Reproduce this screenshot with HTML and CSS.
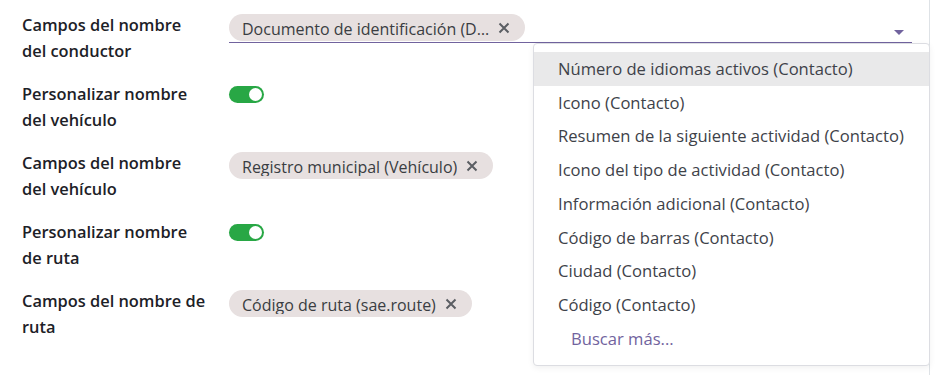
FILE: index.html
```html
<!DOCTYPE html>
<html lang="es">
<head>
<meta charset="utf-8">
<title>Campos</title>
<link rel="stylesheet" href="styles.css">
</head>
<body>
<div class="page">
  <div class="form">
    <div class="label">Campos del nombre<br>del conductor</div>
    <div class="field focused">
      <span class="chip"><span class="chip-text">Documento de identificación (D…</span><svg class="x" viewBox="0 0 12 12" width="12" height="12"><path d="M1.5 1.5 L10.5 10.5 M10.5 1.5 L1.5 10.5"/></svg></span>
      <span class="spacer"></span>
      <svg class="caret" viewBox="0 0 10 5" width="10" height="5"><path d="M0 0 H10 L5 5 Z"/></svg>
      <div class="dropdown">
        <div class="item active">Número de idiomas activos (Contacto)</div>
        <div class="item">Icono (Contacto)</div>
        <div class="item">Resumen de la siguiente actividad (Contacto)</div>
        <div class="item">Icono del tipo de actividad (Contacto)</div>
        <div class="item">Información adicional (Contacto)</div>
        <div class="item">Código de barras (Contacto)</div>
        <div class="item">Ciudad (Contacto)</div>
        <div class="item">Código (Contacto)</div>
        <div class="item more">Buscar más...</div>
      </div>
    </div>

    <div class="label">Personalizar nombre<br>del vehículo</div>
    <div class="field"><span class="toggle"><span class="knob"></span></span></div>

    <div class="label">Campos del nombre<br>del vehículo</div>
    <div class="field">
      <span class="chip"><span class="chip-text">Registro municipal (Vehículo)</span><svg class="x" viewBox="0 0 12 12" width="12" height="12"><path d="M1.5 1.5 L10.5 10.5 M10.5 1.5 L1.5 10.5"/></svg></span>
    </div>

    <div class="label">Personalizar nombre<br>de ruta</div>
    <div class="field"><span class="toggle"><span class="knob"></span></span></div>

    <div class="label">Campos del nombre de<br>ruta</div>
    <div class="field">
      <span class="chip"><span class="chip-text">Código de ruta (sae.route)</span><svg class="x" viewBox="0 0 12 12" width="12" height="12"><path d="M1.5 1.5 L10.5 10.5 M10.5 1.5 L1.5 10.5"/></svg></span>
    </div>
  </div>
</div>
</body>
</html>
```
FILE: styles.css
```css
* { box-sizing: border-box; }
html, body { margin: 0; padding: 0; background: #ffffff; }
body {
  font-family: "Open Sans", "Noto Sans", sans-serif;
  color: #212529;
  width: 940px;
  height: 375px;
  overflow: hidden;
}
.page {
  width: 930px;
  height: 375px;
  border-right: 1px solid #dee2e6;
}
.form {
  display: grid;
  grid-template-columns: 207px 1fr;
  grid-auto-rows: 52px;
  row-gap: 17px;
  padding: 12px 17px 0 22px;
}
.label {
  font-size: 16.4px;
  font-weight: 600;
  line-height: 26px;
  color: #1d2127;
}
.field {
  position: relative;
  display: flex;
  align-items: flex-start;
}
.field.focused {
  height: 31px;
  padding-top: 2px;
  border-bottom: 1px solid #71639e;
}
.chip {
  display: inline-flex;
  align-items: center;
  height: 27px;
  margin-top: 2px;
  padding: 0 15px 0 13px;
  border-radius: 14px;
  background: #e7e0e0;
  color: #3a3d42;
}
.field.focused .chip { margin-top: 0; }
.chip-text {
  font-size: 16px;
  font-weight: 500;
  line-height: 17px;
  overflow: hidden;
  white-space: nowrap;
  padding-top: 3px;
  height: 17px;
  box-sizing: content-box;
}
.x {
  margin-left: 9px;
  stroke: #5b5e63;
  stroke-width: 2;
  fill: none;
}
.spacer { flex: 1; }
.caret {
  margin: 16px 8px 0 0;
  fill: #71639e;
}
.toggle {
  display: inline-flex;
  align-items: center;
  justify-content: flex-end;
  width: 35px;
  height: 17px;
  margin-top: 5px;
  padding-right: 2px;
  border-radius: 9px;
  background: #28a745;
}
.knob {
  width: 13px;
  height: 13px;
  border-radius: 50%;
  background: #ffffff;
}
.dropdown {
  position: absolute;
  left: 304px;
  top: 31px;
  width: 397px;
  padding: 8px 0 10px;
  background: #ffffff;
  border: 1px solid #dcdde2;
  border-radius: 4px;
  box-shadow: 0 2px 6px rgba(0, 0, 0, 0.06);
  z-index: 2;
}
.item {
  padding: 4px 24px;
  font-size: 16.6px;
  line-height: 25.7px;
  color: #3e4249;
  white-space: nowrap;
}
.item.active { background: #e9e9ea; }
.item.more { padding-left: 37px; color: #71639e; }
```
